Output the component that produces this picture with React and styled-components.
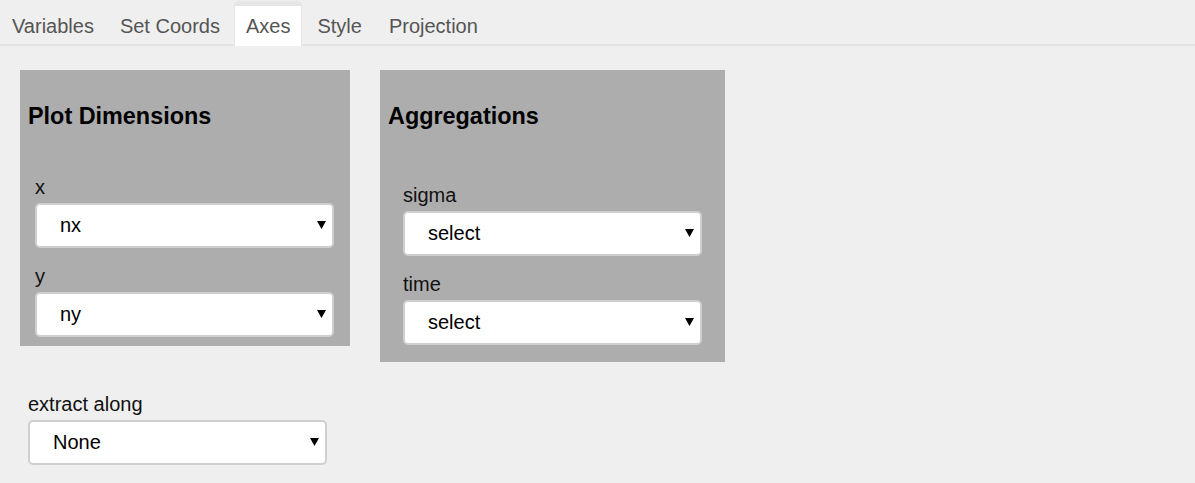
import React from 'react';
import styled, { createGlobalStyle } from 'styled-components';

const GlobalStyle = createGlobalStyle`
  body {
    margin: 0;
    font-family: 'Liberation Sans', Arial, sans-serif;
    font-size: 20px;
    background: #efefef;
    color: #111;
  }
`;

const TabBar = styled.div`
  display: flex;
  align-items: flex-end;
  height: 46px;
  box-sizing: border-box;
  border-bottom: 2px solid #e3e3e3;
`;

const Tab = styled.div`
  padding: 0 11px;
  margin-right: 2px;
  margin-bottom: -2px;
  line-height: 40px;
  border: 1px solid transparent;
  border-top-width: 5px;
  border-bottom: 0;
  border-radius: 5px 5px 0 0;
  color: #555;
  background: ${p => (p.$active ? '#fff' : 'transparent')};
  background-clip: padding-box;
  border-color: ${p => (p.$active ? '#e6e6e6' : 'transparent')};
  cursor: pointer;

  &:nth-child(n + 3) {
    margin-right: 3px;
  }
`;

const Content = styled.div`
  padding: 24px 20px;
`;

const PanelRow = styled.div`
  display: flex;
  align-items: flex-start;
  gap: 30px;
`;

const Panel = styled.div`
  width: ${p => p.$width}px;
  background: #adadad;
  padding-top: 10px;
`;

const PanelTitle = styled.h3`
  margin: 23.4px 0;
  padding-left: 8px;
  font-size: 1.17em;
  color: #000;
`;

const Fields = styled.div`
  padding: ${p => 22 + p.$inset}px ${p => 15 + p.$inset}px ${p => 9 + p.$inset}px;
`;

const Field = styled.div`
  & + & {
    margin-top: 17px;
  }
`;

const Label = styled.div`
  line-height: 23px;
  margin-bottom: 4px;
`;

const SelectWrap = styled.div`
  position: relative;
  width: 299px;
`;

const Select = styled.select`
  appearance: none;
  width: 100%;
  height: 45px;
  box-sizing: border-box;
  border: 2px solid #cfcfcf;
  border-radius: 5px;
  background: #fff;
  padding: 0 30px 0 23px;
  font: inherit;
  color: #000;
  outline: none;
`;

const Arrow = styled.svg`
  position: absolute;
  right: 8px;
  top: 50%;
  transform: translateY(-50%);
  pointer-events: none;
`;

const Extract = styled.div`
  margin-top: 31px;
  padding-left: 8px;
`;

const Dropdown = ({ label, options }) => (
  <Field>
    <Label>{label}</Label>
    <SelectWrap>
      <Select defaultValue={options[0]}>
        {options.map(o => (
          <option key={o}>{o}</option>
        ))}
      </Select>
      <Arrow width="9" height="8" viewBox="0 0 9 8">
        <path d="M0 0h9L4.5 8z" fill="#000" />
      </Arrow>
    </SelectWrap>
  </Field>
);

const tabs = ['Variables', 'Set Coords', 'Axes', 'Style', 'Projection'];

const App = () => (
  <>
    <GlobalStyle />
    <TabBar>
      {tabs.map(t => (
        <Tab key={t} $active={t === 'Axes'}>{t}</Tab>
      ))}
    </TabBar>
    <Content>
      <PanelRow>
        <Panel $width={330}>
          <PanelTitle>Plot Dimensions</PanelTitle>
          <Fields $inset={0}>
            <Dropdown label="x" options={['nx', 'ny']} />
            <Dropdown label="y" options={['ny', 'nx']} />
          </Fields>
        </Panel>
        <Panel $width={345}>
          <PanelTitle>Aggregations</PanelTitle>
          <Fields $inset={8}>
            <Dropdown label="sigma" options={['select', 'mean', 'sum']} />
            <Dropdown label="time" options={['select', 'mean', 'sum']} />
          </Fields>
        </Panel>
      </PanelRow>
      <Extract>
        <Dropdown label="extract along" options={['None', 'sigma', 'time']} />
      </Extract>
    </Content>
  </>
);

export default App;
